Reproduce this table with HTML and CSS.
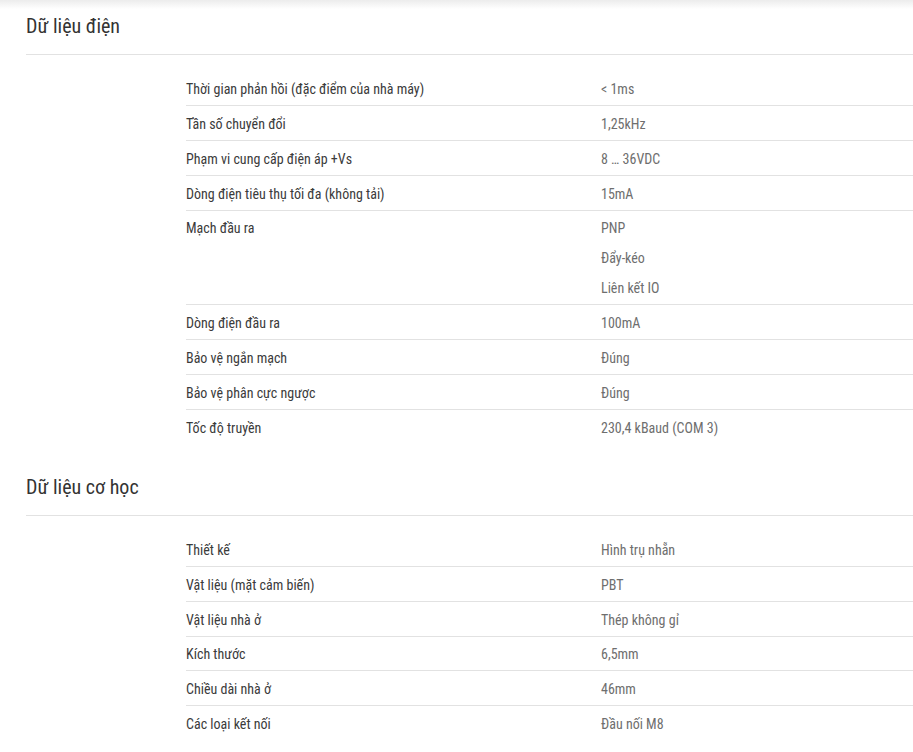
FILE: index.html
```html
<!DOCTYPE html>
<html lang="vi">
<head>
<meta charset="utf-8">
<link rel="stylesheet" href="styles.css">
</head>
<body>
<div class="page">
  <section class="sect">
    <h2 class="sect-title">Dữ liệu điện</h2>
    <div class="table">
      <div class="row"><div class="lbl">Thời gian phản hồi (đặc điểm của nhà máy)</div><div class="val"><div>&lt; 1ms</div></div></div>
      <div class="row"><div class="lbl">Tần số chuyển đổi</div><div class="val"><div>1,25kHz</div></div></div>
      <div class="row"><div class="lbl">Phạm vi cung cấp điện áp +Vs</div><div class="val"><div>8 … 36VDC</div></div></div>
      <div class="row"><div class="lbl">Dòng điện tiêu thụ tối đa (không tải)</div><div class="val"><div>15mA</div></div></div>
      <div class="row"><div class="lbl">Mạch đầu ra</div><div class="val"><div>PNP</div><div>Đẩy-kéo</div><div>Liên kết IO</div></div></div>
      <div class="row"><div class="lbl">Dòng điện đầu ra</div><div class="val"><div>100mA</div></div></div>
      <div class="row"><div class="lbl">Bảo vệ ngắn mạch</div><div class="val"><div>Đúng</div></div></div>
      <div class="row"><div class="lbl">Bảo vệ phân cực ngược</div><div class="val"><div>Đúng</div></div></div>
      <div class="row"><div class="lbl">Tốc độ truyền</div><div class="val"><div>230,4 kBaud (COM 3)</div></div></div>
    </div>
  </section>
  <section class="sect">
    <h2 class="sect-title">Dữ liệu cơ học</h2>
    <div class="table">
      <div class="row"><div class="lbl">Thiết kế</div><div class="val"><div>Hình trụ nhẵn</div></div></div>
      <div class="row"><div class="lbl">Vật liệu (mặt cảm biến)</div><div class="val"><div>PBT</div></div></div>
      <div class="row"><div class="lbl">Vật liệu nhà ở</div><div class="val"><div>Thép không gỉ</div></div></div>
      <div class="row"><div class="lbl">Kích thước</div><div class="val"><div>6,5mm</div></div></div>
      <div class="row"><div class="lbl">Chiều dài nhà ở</div><div class="val"><div>46mm</div></div></div>
      <div class="row"><div class="lbl">Các loại kết nối</div><div class="val"><div>Đầu nối M8</div></div></div>
    </div>
  </section>
</div>
</body>
</html>
```

FILE: styles.css
```css
html, body {
  margin: 0;
  padding: 0;
  background: #fff;
}
body {
  font-family: "Roboto Condensed", Roboto, "Liberation Sans", sans-serif;
  color: #333;
  overflow: hidden;
}
.page {
  padding-left: 26px;
  background: linear-gradient(to bottom, #ececec 0, #fff 9px) no-repeat;
  background-size: 100% 10px;
  min-height: 752px;
}
.sect {
  padding-top: 12px;
}
.sect + .sect {
  padding-top: 29px;
}
.sect-title {
  margin: 0;
  font-size: 20px;
  font-weight: 400;
  line-height: 28px;
  color: #333;
  padding-bottom: 14px;
  border-bottom: 1px solid #e2e2e2;
}
.table {
  padding-top: 16px;
  padding-left: 160px;
}
.row {
  display: flex;
  font-size: 14px;
  line-height: 30px;
  padding: 2.875px 0 1px;
  border-bottom: 1px solid #e2e2e2;
}
.row:last-child {
  border-bottom: none;
}
.lbl {
  width: 415px;
  flex: none;
  color: #3b3b3b;
}
.val {
  color: #6e6e6e;
}
```
